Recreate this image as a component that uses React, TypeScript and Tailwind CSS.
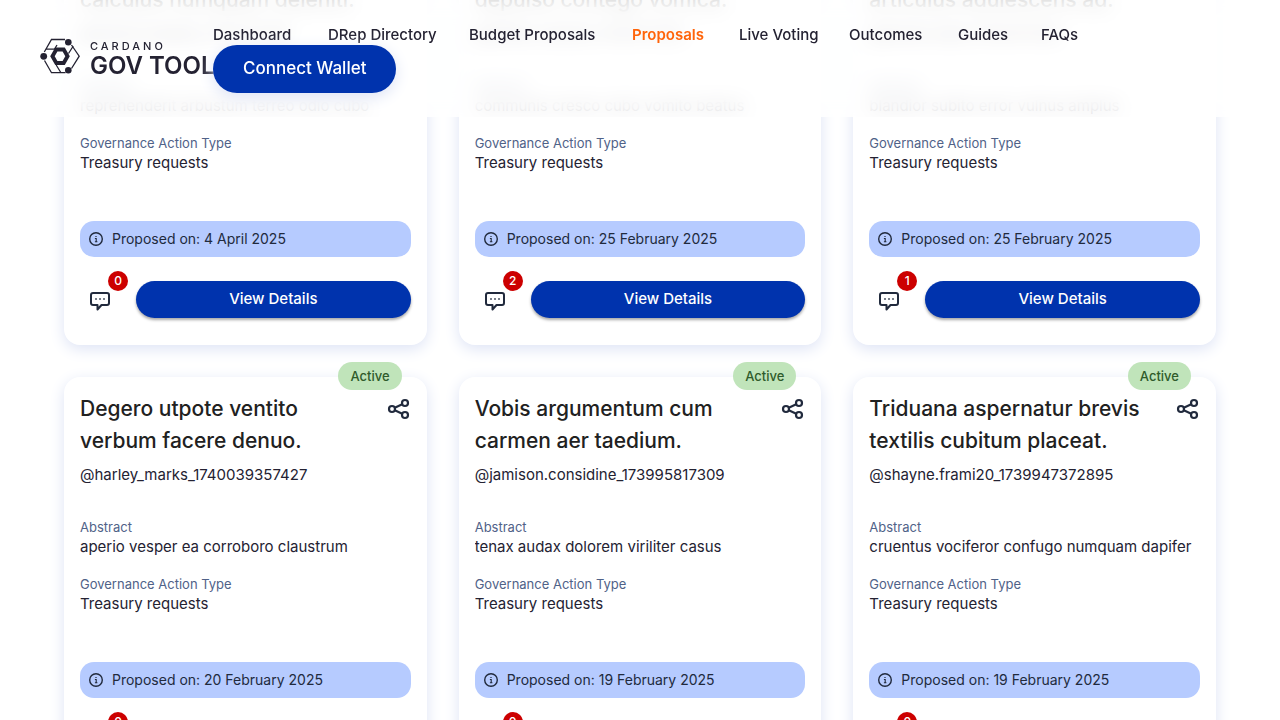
const navItems = [
  'Dashboard',
  'DRep Directory',
  'Budget Proposals',
  'Proposals',
  'Live Voting',
  'Outcomes',
  'Guides',
  'FAQs',
];

interface Proposal {
  title: string;
  author: string;
  abstract: string;
  date: string;
  comments: number;
}

const proposals: Proposal[] = [
  {
    title: 'calculus numquam deleniti.',
    author: '@marlon.keebler_1743771239',
    abstract: 'reprehenderit arbustum terreo odio cubo',
    date: '4 April 2025',
    comments: 0,
  },
  {
    title: 'depulso contego vomica.',
    author: '@willow_hansen_1740471239',
    abstract: 'communis cresco cubo vomito beatus',
    date: '25 February 2025',
    comments: 2,
  },
  {
    title: 'articulus adulescens ad.',
    author: '@dorian.stark_1740470138',
    abstract: 'blandior subito error vulnus amplus',
    date: '25 February 2025',
    comments: 1,
  },
  {
    title: 'Degero utpote ventito verbum facere denuo.',
    author: '@harley_marks_1740039357427',
    abstract: 'aperio vesper ea corroboro claustrum',
    date: '20 February 2025',
    comments: 0,
  },
  {
    title: 'Vobis argumentum cum carmen aer taedium.',
    author: '@jamison.considine_173995817309',
    abstract: 'tenax audax dolorem viriliter casus',
    date: '19 February 2025',
    comments: 0,
  },
  {
    title: 'Triduana aspernatur brevis textilis cubitum placeat.',
    author: '@shayne.frami20_1739947372895',
    abstract: 'cruentus vociferor confugo numquam dapifer',
    date: '19 February 2025',
    comments: 0,
  },
];

function LogoMark() {
  return (
    <svg width="40" height="36" viewBox="0 0 40 36" fill="none" stroke="#242232" strokeWidth="1.3" className="shrink-0" aria-hidden="true">
      <path d="M25 1.500H11.500L4.300 14M6 11.200H14.500L17 7M31.500 7L39.200 18.200L31.500 30.500M28.500 15.500L33.300 8M4.500 22.500L11.500 34.700H25.500M16.200 27L20.800 34.500" />
      <circle cx="28.300" cy="4.300" r="3.300" fill="#242232" stroke="none" />
      <circle cx="3.700" cy="18.300" r="3.400" fill="#242232" stroke="none" />
      <circle cx="28.300" cy="32.300" r="3.300" fill="#242232" stroke="none" />
      <path
        fill="#242232"
        stroke="none"
        fillRule="evenodd"
        d="M15.200 9.600h9.600l5 8.700-5 8.700h-9.600l-5-8.700zM17.400 13.600l-2.700 4.700 2.700 4.700h5.200l2.700-4.700-2.700-4.700z"
      />
    </svg>
  );
}

function ShareIcon() {
  return (
    <svg width="24" height="24" viewBox="0 0 24 24" fill="none" stroke="#212A3D" strokeWidth="2.200" aria-hidden="true">
      <circle cx="18" cy="6" r="3" />
      <circle cx="5" cy="12" r="3" />
      <circle cx="18" cy="18" r="3" />
      <path d="M7.800 10.700l7.400-3.400M7.800 13.300l7.400 3.400" />
    </svg>
  );
}

function CommentIcon() {
  return (
    <svg width="24" height="24" viewBox="0 0 24 24" fill="none" stroke="#212A3D" strokeWidth="2" strokeLinejoin="round" aria-hidden="true">
      <path d="M5 4h14a2 2 0 0 1 2 2v8a2 2 0 0 1-2 2h-5.500L9.500 20.500V16H5a2 2 0 0 1-2-2V6a2 2 0 0 1 2-2z" />
      <path d="M7.200 10h1.600M11.200 10h1.600M15.200 10h1.600" strokeWidth="1.600" />
    </svg>
  );
}

function InfoIcon() {
  return (
    <svg width="16" height="16" viewBox="0 0 16 16" fill="none" stroke="#212A3D" strokeWidth="1.400" aria-hidden="true">
      <circle cx="8" cy="8" r="6.300" />
      <path d="M6.900 7.500H8.200V10.700M6.900 10.700h2.500M7.400 5.500h1.200" strokeWidth="1.100" />
    </svg>
  );
}

function Field({ label, value }: { label: string; value: string }) {
  return (
    <div>
      <dt className="mb-0.5 text-[13px] leading-4 text-[#506288]">{label}</dt>
      <dd className="truncate text-[15px] leading-5 text-[#242232]">{value}</dd>
    </div>
  );
}

function ProposalCard({ proposal }: { proposal: Proposal }) {
  return (
    <article className="relative rounded-[16px] bg-white px-4 pt-4 pb-6 shadow-[0_4px_15px_0_#DDE3F5]">
      <span className="absolute -top-[15px] right-[25px] rounded-full bg-[#C0E4BA] px-3 text-[13px] leading-7 font-medium text-[#2F5B2B]">
        Active
      </span>
      <div className="flex items-start justify-between">
        <h2 className="flex min-h-16 max-w-[290px] items-end text-[21px] leading-8 font-medium text-[#212121]">
          {proposal.title}
        </h2>
        <button type="button" aria-label="Share proposal" className="mt-1">
          <ShareIcon />
        </button>
      </div>
      <p className="mt-2 text-[15px] leading-5 text-[#242232]">{proposal.author}</p>
      <dl className="mt-[34px] grid gap-[19px]">
        <Field label="Abstract" value={proposal.abstract} />
        <Field label="Governance Action Type" value="Treasury requests" />
      </dl>
      <div className="mt-12 flex h-9 items-center gap-2 rounded-[14px] bg-[#B6CBFF] px-2 text-sm text-[#212A3D]">
        <InfoIcon />
        <span>Proposed on: {proposal.date}</span>
      </div>
      <div className="mt-6 flex items-start gap-4">
        <button type="button" aria-label={`${proposal.comments} comments`} className="relative p-2">
          <CommentIcon />
          <span className="absolute -top-[10px] -right-2 h-5 w-5 rounded-full bg-[#CC0000] text-center text-xs leading-5 font-medium text-white">
            {proposal.comments}
          </span>
        </button>
        <button
          type="button"
          className="h-[37px] flex-1 rounded-full bg-[#0033AD] text-[15px] font-medium text-white shadow-[0_2px_3px_rgba(0,0,0,0.35)]"
        >
          View Details
        </button>
      </div>
    </article>
  );
}

export default function App() {
  return (
    <div className="h-screen overflow-hidden bg-white font-['Inter',sans-serif]">
      <header className="fixed inset-x-0 top-0 z-10 flex items-start bg-white/80 px-10 py-6 backdrop-blur-[10px]">
        <a href="#" aria-label="Cardano GovTool" className="mt-3.5 flex w-[173px] shrink-0 gap-2.5 text-[#242232]">
          <LogoMark />
          <span className="flex flex-col gap-0.5 whitespace-nowrap">
            <span className="pt-0.5 text-[11px] leading-3 font-medium tracking-[3px]">CARDANO</span>
            <span className="text-[24px] leading-6 font-semibold">GOV TOOL</span>
          </span>
        </a>
        <div>
          <nav className="grid grid-cols-[115px_141px_163px_107px_110px_109px_83px_auto] text-[15px] leading-[21px] font-medium whitespace-nowrap text-[#242232]">
            {navItems.map((item) => (
              <a key={item} href="#" className={item === 'Proposals' ? 'font-semibold text-[#FF640A]' : ''}>
                {item}
              </a>
            ))}
          </nav>
          <button
            type="button"
            className="h-12 rounded-full bg-[#0033AD] px-[30px] text-[17px] font-medium text-white shadow-[0_4px_15px_0_#DDE3F5]"
          >
            Connect Wallet
          </button>
        </div>
      </header>
      <main className="-mt-16 grid grid-cols-3 gap-8 px-16">
        {proposals.map((proposal) => (
          <ProposalCard key={proposal.author} proposal={proposal} />
        ))}
      </main>
    </div>
  );
}
